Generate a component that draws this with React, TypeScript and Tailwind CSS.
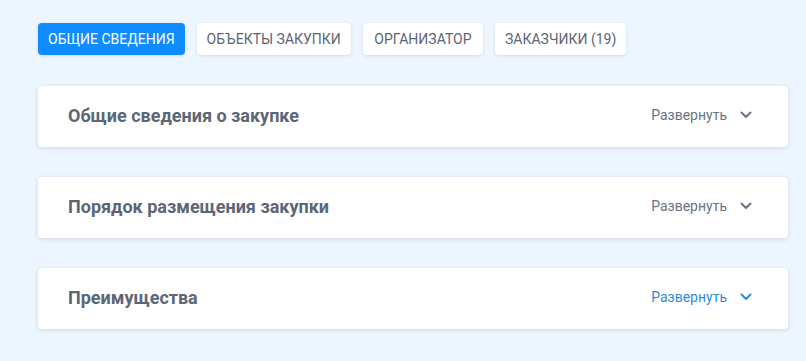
import React from 'react';

const tabs = ['Общие сведения', 'Объекты закупки', 'Организатор', 'Заказчики (19)'];

const sections = [
  { title: 'Общие сведения о закупке', active: false },
  { title: 'Порядок размещения закупки', active: false },
  { title: 'Преимущества', active: true },
];

const Chevron: React.FC<{ className?: string }> = ({ className }) => (
  <svg width="12" height="8" viewBox="0 0 12 8" fill="none" className={className}>
    <path d="M1.5 1.5L6 6L10.5 1.5" stroke="currentColor" strokeWidth="2" strokeLinecap="round" strokeLinejoin="round" />
  </svg>
);

export default function App() {
  return (
    <div className="min-h-[361px] w-full bg-[#edf5fe] px-[38px] pt-[23px] font-['Roboto',sans-serif]">
      {/* Tabs */}
      <div className="flex gap-3">
        {tabs.map((t, i) => (
          <button
            key={t}
            className={`h-8 rounded px-[10px] text-[14px] uppercase shadow-[0_1px_3px_rgba(60,80,120,0.15)] ${
              i === 0 ? 'bg-[#0f8cff] text-white' : 'bg-white text-[#5b6573]'
            } ${i === 2 ? 'px-[11.5px]' : ''}`}
          >
            {t}
          </button>
        ))}
      </div>

      {/* Sections */}
      <div className="mt-[31px] flex w-[750px] flex-col gap-[30px]">
        {sections.map((s) => (
          <div
            key={s.title}
            className="flex h-[61px] items-center justify-between rounded-sm bg-white pb-[3px] pl-[30px] pr-[36px] shadow-[0_1px_4px_rgba(60,80,120,0.18)]"
          >
            <span className="text-[18px] font-bold text-[#5b6677]">{s.title}</span>
            <div className={`flex items-center gap-[13px] ${s.active ? 'text-[#2a8ce0]' : 'text-[#6b7380]'}`}>
              <span className="text-[14px]">Развернуть</span>
              <Chevron />
            </div>
          </div>
        ))}
      </div>
    </div>
  );
}
